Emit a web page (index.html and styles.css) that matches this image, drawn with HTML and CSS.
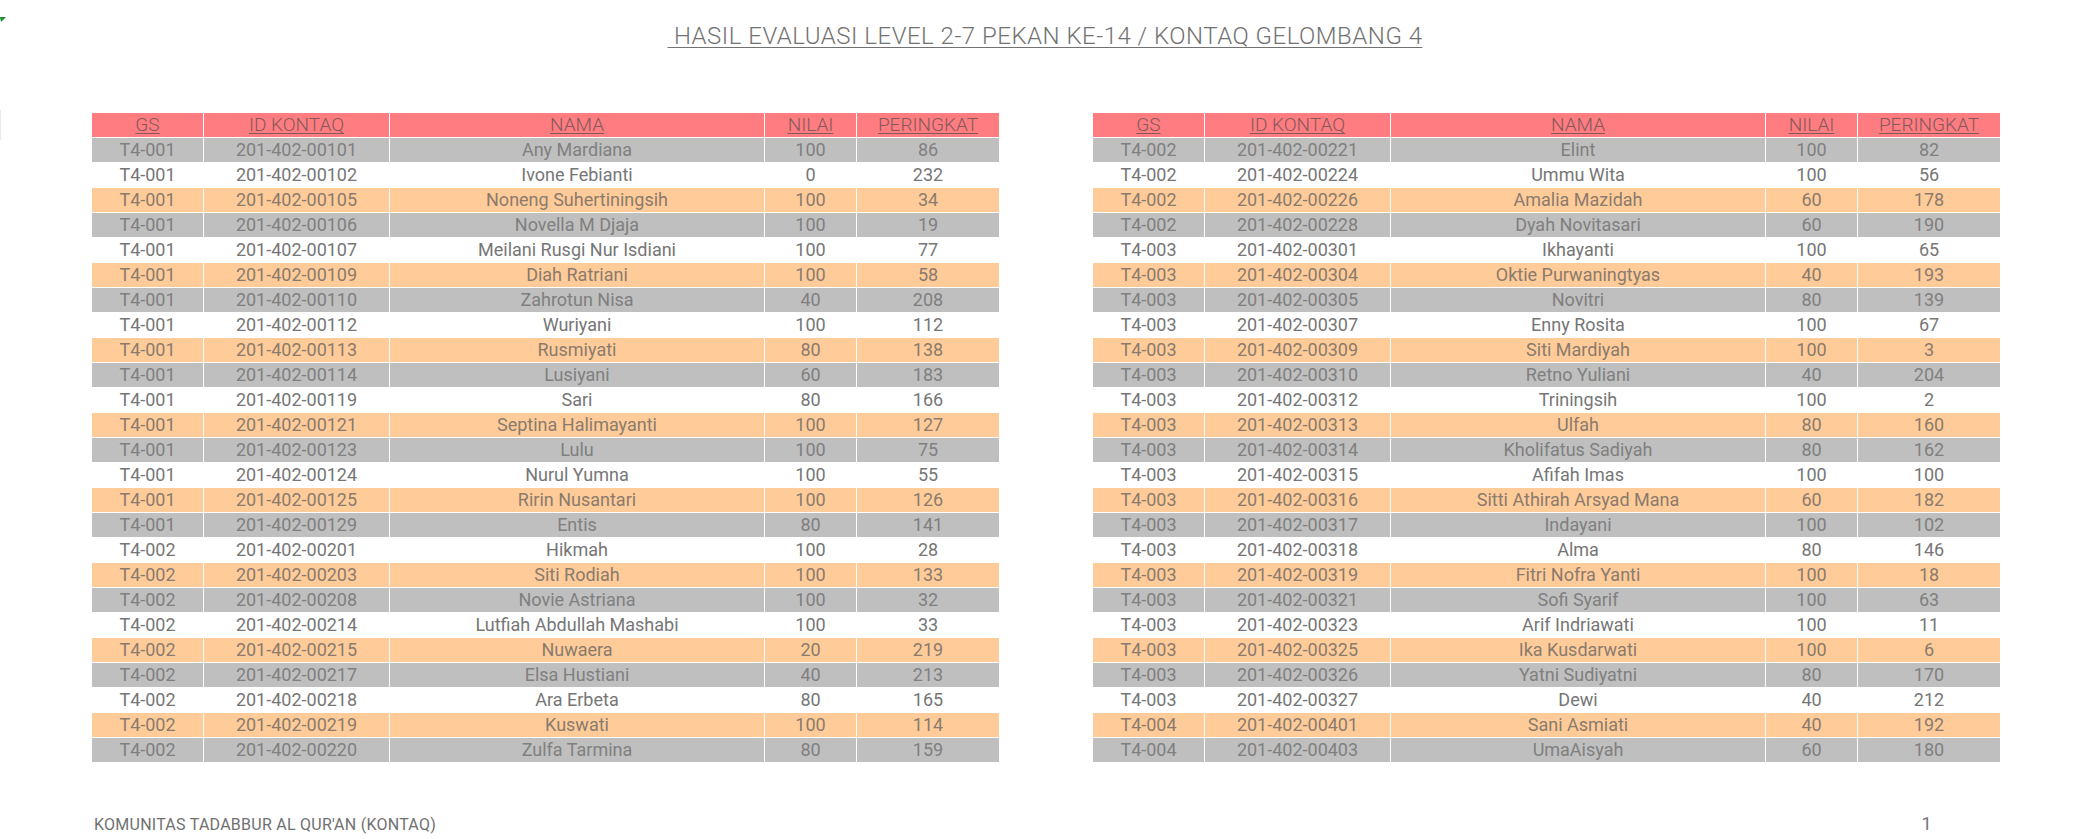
FILE: index.html
```html
<!DOCTYPE html>
<html lang="id">
<head>
<meta charset="utf-8">
<title>Hasil Evaluasi Level 2-7 Pekan ke-14</title>
<link rel="stylesheet" href="styles.css">
</head>
<body>
<svg class="marker" width="8" height="8" viewBox="0 0 8 8" aria-hidden="true"><polygon points="0,0 6,0 1,5" fill="#1e8a2e"/></svg>
<div class="edge-line"></div>
<div class="page">
  <h1 class="title"><span>&nbsp;HASIL EVALUASI LEVEL 2-7 PEKAN KE-14 / KONTAQ GELOMBANG 4</span></h1>
  <div class="tables">
    <table class="grid">
      <colgroup><col class="c-gs"><col class="c-id"><col class="c-nama"><col class="c-nilai"><col class="c-rank"></colgroup>
      <thead><tr><th>GS</th><th>ID KONTAQ</th><th>NAMA</th><th>NILAI</th><th>PERINGKAT</th></tr></thead>
      <tbody>
        <tr class="g"><td>T4-001</td><td>201-402-00101</td><td>Any Mardiana</td><td>100</td><td>86</td></tr>
        <tr class="w"><td>T4-001</td><td>201-402-00102</td><td>Ivone Febianti</td><td>0</td><td>232</td></tr>
        <tr class="o"><td>T4-001</td><td>201-402-00105</td><td>Noneng Suhertiningsih</td><td>100</td><td>34</td></tr>
        <tr class="g"><td>T4-001</td><td>201-402-00106</td><td>Novella M Djaja</td><td>100</td><td>19</td></tr>
        <tr class="w"><td>T4-001</td><td>201-402-00107</td><td>Meilani Rusgi Nur Isdiani</td><td>100</td><td>77</td></tr>
        <tr class="o"><td>T4-001</td><td>201-402-00109</td><td>Diah Ratriani</td><td>100</td><td>58</td></tr>
        <tr class="g"><td>T4-001</td><td>201-402-00110</td><td>Zahrotun Nisa</td><td>40</td><td>208</td></tr>
        <tr class="w"><td>T4-001</td><td>201-402-00112</td><td>Wuriyani</td><td>100</td><td>112</td></tr>
        <tr class="o"><td>T4-001</td><td>201-402-00113</td><td>Rusmiyati</td><td>80</td><td>138</td></tr>
        <tr class="g"><td>T4-001</td><td>201-402-00114</td><td>Lusiyani</td><td>60</td><td>183</td></tr>
        <tr class="w"><td>T4-001</td><td>201-402-00119</td><td>Sari</td><td>80</td><td>166</td></tr>
        <tr class="o"><td>T4-001</td><td>201-402-00121</td><td>Septina Halimayanti</td><td>100</td><td>127</td></tr>
        <tr class="g"><td>T4-001</td><td>201-402-00123</td><td>Lulu</td><td>100</td><td>75</td></tr>
        <tr class="w"><td>T4-001</td><td>201-402-00124</td><td>Nurul Yumna</td><td>100</td><td>55</td></tr>
        <tr class="o"><td>T4-001</td><td>201-402-00125</td><td>Ririn Nusantari</td><td>100</td><td>126</td></tr>
        <tr class="g"><td>T4-001</td><td>201-402-00129</td><td>Entis</td><td>80</td><td>141</td></tr>
        <tr class="w"><td>T4-002</td><td>201-402-00201</td><td>Hikmah</td><td>100</td><td>28</td></tr>
        <tr class="o"><td>T4-002</td><td>201-402-00203</td><td>Siti Rodiah</td><td>100</td><td>133</td></tr>
        <tr class="g"><td>T4-002</td><td>201-402-00208</td><td>Novie Astriana</td><td>100</td><td>32</td></tr>
        <tr class="w"><td>T4-002</td><td>201-402-00214</td><td>Lutfiah Abdullah Mashabi</td><td>100</td><td>33</td></tr>
        <tr class="o"><td>T4-002</td><td>201-402-00215</td><td>Nuwaera</td><td>20</td><td>219</td></tr>
        <tr class="g"><td>T4-002</td><td>201-402-00217</td><td>Elsa Hustiani</td><td>40</td><td>213</td></tr>
        <tr class="w"><td>T4-002</td><td>201-402-00218</td><td>Ara Erbeta</td><td>80</td><td>165</td></tr>
        <tr class="o"><td>T4-002</td><td>201-402-00219</td><td>Kuswati</td><td>100</td><td>114</td></tr>
        <tr class="g"><td>T4-002</td><td>201-402-00220</td><td>Zulfa Tarmina</td><td>80</td><td>159</td></tr>
      </tbody>
    </table>
    <table class="grid">
      <colgroup><col class="c-gs"><col class="c-id"><col class="c-nama"><col class="c-nilai"><col class="c-rank"></colgroup>
      <thead><tr><th>GS</th><th>ID KONTAQ</th><th>NAMA</th><th>NILAI</th><th>PERINGKAT</th></tr></thead>
      <tbody>
        <tr class="g"><td>T4-002</td><td>201-402-00221</td><td>Elint</td><td>100</td><td>82</td></tr>
        <tr class="w"><td>T4-002</td><td>201-402-00224</td><td>Ummu Wita</td><td>100</td><td>56</td></tr>
        <tr class="o"><td>T4-002</td><td>201-402-00226</td><td>Amalia Mazidah</td><td>60</td><td>178</td></tr>
        <tr class="g"><td>T4-002</td><td>201-402-00228</td><td>Dyah Novitasari</td><td>60</td><td>190</td></tr>
        <tr class="w"><td>T4-003</td><td>201-402-00301</td><td>Ikhayanti</td><td>100</td><td>65</td></tr>
        <tr class="o"><td>T4-003</td><td>201-402-00304</td><td>Oktie Purwaningtyas</td><td>40</td><td>193</td></tr>
        <tr class="g"><td>T4-003</td><td>201-402-00305</td><td>Novitri</td><td>80</td><td>139</td></tr>
        <tr class="w"><td>T4-003</td><td>201-402-00307</td><td>Enny Rosita</td><td>100</td><td>67</td></tr>
        <tr class="o"><td>T4-003</td><td>201-402-00309</td><td>Siti Mardiyah</td><td>100</td><td>3</td></tr>
        <tr class="g"><td>T4-003</td><td>201-402-00310</td><td>Retno Yuliani</td><td>40</td><td>204</td></tr>
        <tr class="w"><td>T4-003</td><td>201-402-00312</td><td>Triningsih</td><td>100</td><td>2</td></tr>
        <tr class="o"><td>T4-003</td><td>201-402-00313</td><td>Ulfah</td><td>80</td><td>160</td></tr>
        <tr class="g"><td>T4-003</td><td>201-402-00314</td><td>Kholifatus Sadiyah</td><td>80</td><td>162</td></tr>
        <tr class="w"><td>T4-003</td><td>201-402-00315</td><td>Afifah Imas</td><td>100</td><td>100</td></tr>
        <tr class="o"><td>T4-003</td><td>201-402-00316</td><td>Sitti Athirah Arsyad Mana</td><td>60</td><td>182</td></tr>
        <tr class="g"><td>T4-003</td><td>201-402-00317</td><td>Indayani</td><td>100</td><td>102</td></tr>
        <tr class="w"><td>T4-003</td><td>201-402-00318</td><td>Alma</td><td>80</td><td>146</td></tr>
        <tr class="o"><td>T4-003</td><td>201-402-00319</td><td>Fitri Nofra Yanti</td><td>100</td><td>18</td></tr>
        <tr class="g"><td>T4-003</td><td>201-402-00321</td><td>Sofi Syarif</td><td>100</td><td>63</td></tr>
        <tr class="w"><td>T4-003</td><td>201-402-00323</td><td>Arif Indriawati</td><td>100</td><td>11</td></tr>
        <tr class="o"><td>T4-003</td><td>201-402-00325</td><td>Ika Kusdarwati</td><td>100</td><td>6</td></tr>
        <tr class="g"><td>T4-003</td><td>201-402-00326</td><td>Yatni Sudiyatni</td><td>80</td><td>170</td></tr>
        <tr class="w"><td>T4-003</td><td>201-402-00327</td><td>Dewi</td><td>40</td><td>212</td></tr>
        <tr class="o"><td>T4-004</td><td>201-402-00401</td><td>Sani Asmiati</td><td>40</td><td>192</td></tr>
        <tr class="g"><td>T4-004</td><td>201-402-00403</td><td>UmaAisyah</td><td>60</td><td>180</td></tr>
      </tbody>
    </table>
  </div>
  <footer class="footer">
    <span class="org">KOMUNITAS TADABBUR AL QUR'AN (KONTAQ)</span>
    <span class="pageno">1</span>
  </footer>
</div>
</body>
</html>
```
FILE: styles.css
```css
html, body {
  margin: 0;
  padding: 0;
  background: #ffffff;
}

body {
  width: 2075px;
  height: 839px;
  overflow: hidden;
  position: relative;
  font-family: Roboto, "Liberation Sans", sans-serif;
  color: #777777;
}

.marker {
  position: absolute;
  left: 0;
  top: 17px;
}

.edge-line {
  position: absolute;
  left: 0;
  top: 110px;
  width: 1px;
  height: 30px;
  background: #e6ece6;
}

.page {
  padding-left: 91px;
  width: 1908px;
}

.title {
  margin: 21px 0 0 0;
  font-size: 24px;
  line-height: 30px;
  font-weight: 300;
  letter-spacing: 0.5px;
  color: #727272;
  text-align: center;
}

.title span {
  text-decoration: underline;
  text-decoration-thickness: 1px;
  text-underline-offset: 3px;
}

.tables {
  display: flex;
  gap: 92px;
  margin-top: 61px;
}

.grid {
  border-collapse: collapse;
  table-layout: fixed;
  width: 908px;
}

.c-gs { width: 112px; }
.c-id { width: 186px; }
.c-nama { width: 375px; }
.c-nilai { width: 92px; }
.c-rank { width: 143px; }

.grid th,
.grid td {
  border: 1px solid #ffffff;
  padding: 0;
  height: 24px;
  text-align: center;
  vertical-align: middle;
  white-space: nowrap;
  overflow: hidden;
}

.grid th {
  background: #ff7c80;
  font-size: 19px;
  font-weight: 300;
  color: #825a5c;
  text-decoration: underline;
  text-decoration-thickness: 1px;
  text-underline-offset: 2px;
  line-height: 22px;
}

.grid td {
  font-size: 18px;
  font-weight: 400;
  line-height: 22px;
  color: #808080;
}

.grid tr.g td { background: #bfbfbf; }
.grid tr.w td { background: #ffffff; color: #767676; }
.grid tr.o td { background: #ffcc99; color: #8a7b6e; }

.footer {
  display: flex;
  justify-content: space-between;
  align-items: baseline;
  margin-top: 51px;
  padding-left: 3px;
  padding-right: 67px;
}

.org {
  font-size: 16px;
  line-height: 20px;
  letter-spacing: 0.25px;
  color: #707070;
}

.pageno {
  font-size: 19px;
  line-height: 20px;
  color: #7a7a7a;
}
```
